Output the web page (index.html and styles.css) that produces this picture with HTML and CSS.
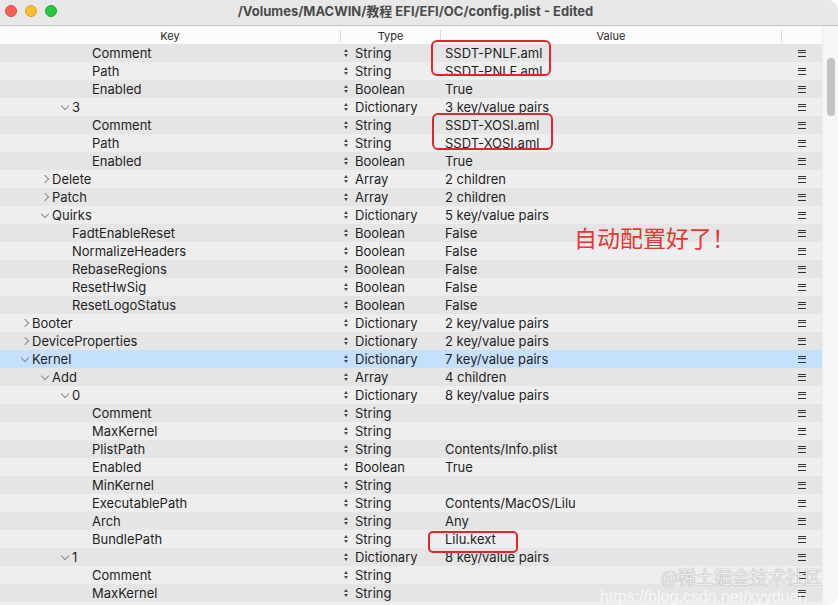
FILE: index.html
```html
<!DOCTYPE html>
<html lang="zh">
<head>
<meta charset="utf-8">
<title>config.plist - Edited</title>
<link rel="stylesheet" href="styles.css">
</head>
<body>
<div class="window">
  <div class="titlebar">
    <div class="lights">
      <span class="light red"></span><span class="light yellow"></span><span class="light green"></span>
    </div>
    <div class="title">/Volumes/MACWIN/教程 EFI/EFI/OC/config.plist - Edited</div>
  </div>
  <div class="content">
    <div class="table">
      <div class="header">
        <div class="hcell hkey">Key</div>
        <div class="hcell hsep">Type</div>
        <div class="hcell hsep">Value</div>
        <div class="hcell hsep"></div>
      </div>
      <div class="rows">
        <div class="row"><div class="key l3">Comment</div><div class="type"><i class="ud"></i>String</div><div class="val">SSDT-PNLF.aml</div><div class="menu"><i class="burger"></i></div></div>
        <div class="row"><div class="key l3">Path</div><div class="type"><i class="ud"></i>String</div><div class="val">SSDT-PNLF.aml</div><div class="menu"><i class="burger"></i></div></div>
        <div class="row"><div class="key l3">Enabled</div><div class="type"><i class="ud"></i>Boolean</div><div class="val">True</div><div class="menu"><i class="burger"></i></div></div>
        <div class="row"><div class="key l2"><i class="tog down"></i>3</div><div class="type"><i class="ud"></i>Dictionary</div><div class="val">3 key/value pairs</div><div class="menu"><i class="burger"></i></div></div>
        <div class="row"><div class="key l3">Comment</div><div class="type"><i class="ud"></i>String</div><div class="val">SSDT-XOSI.aml</div><div class="menu"><i class="burger"></i></div></div>
        <div class="row"><div class="key l3">Path</div><div class="type"><i class="ud"></i>String</div><div class="val">SSDT-XOSI.aml</div><div class="menu"><i class="burger"></i></div></div>
        <div class="row"><div class="key l3">Enabled</div><div class="type"><i class="ud"></i>Boolean</div><div class="val">True</div><div class="menu"><i class="burger"></i></div></div>
        <div class="row"><div class="key l1"><i class="tog right"></i>Delete</div><div class="type"><i class="ud"></i>Array</div><div class="val">2 children</div><div class="menu"><i class="burger"></i></div></div>
        <div class="row"><div class="key l1"><i class="tog right"></i>Patch</div><div class="type"><i class="ud"></i>Array</div><div class="val">2 children</div><div class="menu"><i class="burger"></i></div></div>
        <div class="row"><div class="key l1"><i class="tog down"></i>Quirks</div><div class="type"><i class="ud"></i>Dictionary</div><div class="val">5 key/value pairs</div><div class="menu"><i class="burger"></i></div></div>
        <div class="row"><div class="key l2">FadtEnableReset</div><div class="type"><i class="ud"></i>Boolean</div><div class="val">False</div><div class="menu"><i class="burger"></i></div></div>
        <div class="row"><div class="key l2">NormalizeHeaders</div><div class="type"><i class="ud"></i>Boolean</div><div class="val">False</div><div class="menu"><i class="burger"></i></div></div>
        <div class="row"><div class="key l2">RebaseRegions</div><div class="type"><i class="ud"></i>Boolean</div><div class="val">False</div><div class="menu"><i class="burger"></i></div></div>
        <div class="row"><div class="key l2">ResetHwSig</div><div class="type"><i class="ud"></i>Boolean</div><div class="val">False</div><div class="menu"><i class="burger"></i></div></div>
        <div class="row"><div class="key l2">ResetLogoStatus</div><div class="type"><i class="ud"></i>Boolean</div><div class="val">False</div><div class="menu"><i class="burger"></i></div></div>
        <div class="row"><div class="key l0"><i class="tog right"></i>Booter</div><div class="type"><i class="ud"></i>Dictionary</div><div class="val">2 key/value pairs</div><div class="menu"><i class="burger"></i></div></div>
        <div class="row"><div class="key l0"><i class="tog right"></i>DeviceProperties</div><div class="type"><i class="ud"></i>Dictionary</div><div class="val">2 key/value pairs</div><div class="menu"><i class="burger"></i></div></div>
        <div class="row selected"><div class="key l0"><i class="tog down"></i>Kernel</div><div class="type"><i class="ud"></i>Dictionary</div><div class="val">7 key/value pairs</div><div class="menu"><i class="burger"></i></div></div>
        <div class="row"><div class="key l1"><i class="tog down"></i>Add</div><div class="type"><i class="ud"></i>Array</div><div class="val">4 children</div><div class="menu"><i class="burger"></i></div></div>
        <div class="row"><div class="key l2"><i class="tog down"></i>0</div><div class="type"><i class="ud"></i>Dictionary</div><div class="val">8 key/value pairs</div><div class="menu"><i class="burger"></i></div></div>
        <div class="row"><div class="key l3">Comment</div><div class="type"><i class="ud"></i>String</div><div class="val"></div><div class="menu"><i class="burger"></i></div></div>
        <div class="row"><div class="key l3">MaxKernel</div><div class="type"><i class="ud"></i>String</div><div class="val"></div><div class="menu"><i class="burger"></i></div></div>
        <div class="row"><div class="key l3">PlistPath</div><div class="type"><i class="ud"></i>String</div><div class="val">Contents/Info.plist</div><div class="menu"><i class="burger"></i></div></div>
        <div class="row"><div class="key l3">Enabled</div><div class="type"><i class="ud"></i>Boolean</div><div class="val">True</div><div class="menu"><i class="burger"></i></div></div>
        <div class="row"><div class="key l3">MinKernel</div><div class="type"><i class="ud"></i>String</div><div class="val"></div><div class="menu"><i class="burger"></i></div></div>
        <div class="row"><div class="key l3">ExecutablePath</div><div class="type"><i class="ud"></i>String</div><div class="val">Contents/MacOS/Lilu</div><div class="menu"><i class="burger"></i></div></div>
        <div class="row"><div class="key l3">Arch</div><div class="type"><i class="ud"></i>String</div><div class="val">Any</div><div class="menu"><i class="burger"></i></div></div>
        <div class="row"><div class="key l3">BundlePath</div><div class="type"><i class="ud"></i>String</div><div class="val">Lilu.kext</div><div class="menu"><i class="burger"></i></div></div>
        <div class="row"><div class="key l2"><i class="tog down"></i>1</div><div class="type"><i class="ud"></i>Dictionary</div><div class="val">8 key/value pairs</div><div class="menu"><i class="burger"></i></div></div>
        <div class="row"><div class="key l3">Comment</div><div class="type"><i class="ud"></i>String</div><div class="val"></div><div class="menu"><i class="burger"></i></div></div>
        <div class="row"><div class="key l3">MaxKernel</div><div class="type"><i class="ud"></i>String</div><div class="val"></div><div class="menu"><i class="burger"></i></div></div>
        <div class="row blank"></div>
      </div>
    </div>
    <div class="scrollbar"><div class="thumb"></div></div>
  </div>

  <div class="mark m1"></div>
  <div class="mark m2"></div>
  <div class="mark m3"></div>
  <div class="note">自动配置好了！</div>
  <div class="wm-url">https://blog.csdn.net/xyyduan</div>
  <div class="wm">@稀土掘金技术社区</div>
</div>
</body>
</html>
```

FILE: styles.css
```css
* { box-sizing: border-box; }
html, body { margin: 0; padding: 0; background: #ffffff; }
body {
  width: 838px;
  height: 605px;
  overflow: hidden;
  font-family: Inter, "Liberation Sans", "Noto Sans CJK SC", sans-serif;
  color: #1f1f1f;
}
.window {
  position: relative;
  width: 838px;
  height: 605px;
  overflow: hidden;
  border-top-right-radius: 10px;
  border-bottom-right-radius: 10px;
  background: #f5f5f5;
  display: flex;
  flex-direction: column;
}
.titlebar {
  height: 26px;
  flex: none;
  background: #e8e8e8;
  border-bottom: 1px solid #c4c4c4;
  display: flex;
  align-items: center;
  position: relative;
}
.lights {
  display: flex;
  gap: 8px;
  padding-left: 5px;
  margin-top: -3px;
}
.light {
  width: 12px;
  height: 12px;
  border-radius: 50%;
  display: block;
}
.red { background: #fe5f57; border: 0.5px solid #e2463f; }
.yellow { background: #febc2e; border: 0.5px solid #e1a116; }
.green { background: #28c840; border: 0.5px solid #14ae2c; }
.title {
  flex: 1;
  text-align: center;
  font-size: 13px;
  font-weight: 700;
  color: #4b4b4b;
  margin-top: -4px;
  padding-right: 64px;
  font-family: Inter, "Noto Sans CJK SC", sans-serif;
}
.content {
  flex: 1;
  display: flex;
  min-height: 0;
}
.table {
  width: 822px;
  flex: none;
  display: flex;
  flex-direction: column;
}
.header {
  height: 18px;
  flex: none;
  background: #fbfbfb;
  display: grid;
  grid-template-columns: 340px 100px 341px 41px;
  font-size: 11px;
  color: #2a2a2a;
  align-items: center;
}
.hcell {
  text-align: center;
  line-height: 12px;
  height: 12px;
  margin-top: 2px;
}
.hsep { border-left: 1px solid #dadada; }
.rows { flex: 1; overflow: hidden; }
.row {
  height: 18px;
  display: grid;
  grid-template-columns: 340px 100px 341px 41px;
  align-items: center;
  font-size: 13px;
  line-height: 18px;
  white-space: nowrap;
  background: #eeeeee;
}
.row:nth-child(odd) { background: #e5e5e5; }
.row.selected { background: #c5e0fc; }
.key { display: flex; align-items: center; height: 18px; }
.l0 { padding-left: 32px; }
.l1 { padding-left: 52px; }
.l2 { padding-left: 72px; }
.l3 { padding-left: 92px; }
.tog {
  width: 14px;
  height: 18px;
  margin-left: -14px;
  display: block;
  position: relative;
}
.tog.down::before {
  content: "";
  position: absolute;
  left: 4px;
  top: 5px;
  width: 5px;
  height: 5px;
  border-right: 1.2px solid #8d8d8d;
  border-bottom: 1.2px solid #8d8d8d;
  transform: rotate(45deg);
}
.tog.right::before {
  content: "";
  position: absolute;
  left: 4px;
  top: 6px;
  width: 5px;
  height: 5px;
  border-right: 1.2px solid #8d8d8d;
  border-bottom: 1.2px solid #8d8d8d;
  transform: rotate(-45deg);
}
.type { display: flex; align-items: center; padding-left: 4px; }
.ud {
  display: block;
  width: 5px;
  height: 8px;
  margin-right: 6px;
  position: relative;
}
.ud::before, .ud::after {
  content: "";
  position: absolute;
  left: 0;
  border-left: 2.5px solid transparent;
  border-right: 2.5px solid transparent;
}
.ud::before { top: 0; border-bottom: 3px solid #4a4a4a; }
.ud::after { bottom: 0; border-top: 3px solid #4a4a4a; }
.val { padding-left: 5px; }
.menu { display: flex; justify-content: center; align-items: center; }
.burger {
  display: block;
  width: 8px;
  height: 7px;
  border-top: 1.4px solid #333;
  border-bottom: 1.4px solid #333;
  position: relative;
}
.burger::before {
  content: "";
  position: absolute;
  left: 0;
  right: 0;
  top: 1.4px;
  border-top: 1.4px solid #333;
}
.scrollbar {
  flex: 1;
  background: #f6f6f6;
  border-left: 1px solid #ebebeb;
  position: relative;
}
.thumb {
  position: absolute;
  left: 4px;
  top: 32px;
  width: 8px;
  height: 58px;
  border-radius: 4px;
  background: #c3c3c3;
}
.mark {
  position: absolute;
  border: 2px solid #e3242d;
  border-radius: 6px;
}
.m1 { left: 431px; top: 40px; width: 120px; height: 36px; }
.m2 { left: 432px; top: 113px; width: 121px; height: 37px; }
.m3 { left: 428px; top: 531px; width: 90px; height: 22px; border-radius: 5px; }
.note {
  position: absolute;
  left: 574px;
  top: 222px;
  font-size: 23px;
  line-height: 30px;
  color: #e8352f;
  font-family: "Noto Sans CJK SC", sans-serif;
  font-weight: 400;
}
.wm {
  position: absolute;
  left: 661px;
  top: 564px;
  font-size: 18px;
  line-height: 25px;
  color: rgba(255, 255, 255, 0.9);
  text-shadow: 0 0 1px rgba(60, 60, 60, 0.7);
  font-family: "Noto Sans CJK SC", sans-serif;
}
.wm-url {
  position: absolute;
  left: 600px;
  top: 589px;
  font-size: 16px;
  line-height: 16px;
  color: rgba(255, 255, 255, 0.7);
  font-family: "Liberation Sans", sans-serif;
}
```
